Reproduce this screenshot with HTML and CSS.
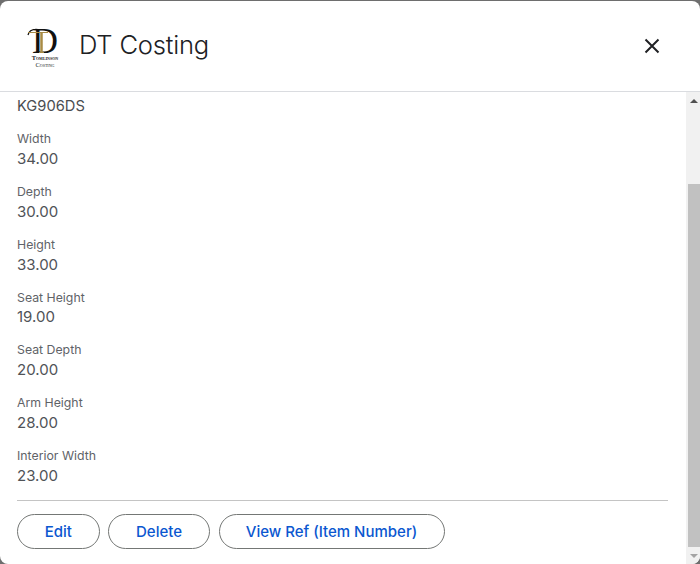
FILE: index.html
```html
<!DOCTYPE html>
<html lang="en">
<head>
<meta charset="utf-8">
<title>DT Costing</title>
<link rel="stylesheet" href="styles.css">
</head>
<body>
<div class="dialog">
  <header class="header">
    <svg class="logo" width="38" height="48" viewBox="0 0 38 48" aria-label="Tomlinson Costing logo">
      <text class="logo-d" x="6" y="31">D</text>
      <path class="logo-swash" d="M2 13 C3 8.500 7 7 12 7.500"/>
      <path class="logo-bar" d="M2 10.500 H22"/>
      <path class="logo-stem" d="M15.500 10.500 V30"/>
      <path class="logo-foot" d="M13 30.500 H18"/>
      <text class="logo-t1" x="19" y="37.500" text-anchor="middle">Tomlinson</text>
      <text class="logo-t2" x="19" y="44.500" text-anchor="middle">Costing</text>
    </svg>
    <h1 class="title">DT Costing</h1>
    <svg class="close" width="16" height="16" viewBox="0 0 16 16" aria-label="Close">
      <path d="M1.500 1.500 L14.500 14.500 M14.500 1.500 L1.500 14.500"/>
    </svg>
  </header>
  <div class="main">
    <div class="content">
      <div class="first">KG906DS</div>
      <div class="field"><div class="label">Width</div><div class="value">34.00</div></div>
      <div class="field"><div class="label">Depth</div><div class="value">30.00</div></div>
      <div class="field"><div class="label">Height</div><div class="value">33.00</div></div>
      <div class="field"><div class="label">Seat Height</div><div class="value">19.00</div></div>
      <div class="field"><div class="label">Seat Depth</div><div class="value">20.00</div></div>
      <div class="field"><div class="label">Arm Height</div><div class="value">28.00</div></div>
      <div class="field"><div class="label">Interior Width</div><div class="value">23.00</div></div>
      <div class="actions">
        <button class="btn btn-edit">Edit</button>
        <button class="btn btn-delete">Delete</button>
        <button class="btn btn-ref">View Ref (Item Number)</button>
      </div>
    </div>
    <div class="scrollbar">
      <div class="arrow-box"><span class="arrow-up"></span></div>
      <div class="track"><div class="thumb"></div></div>
      <div class="arrow-box"><span class="arrow-down"></span></div>
    </div>
  </div>
</div>
</body>
</html>
```
FILE: styles.css
```css
html, body {
  margin: 0;
  padding: 0;
  height: 100%;
  background: #6e6e6e;
  overflow: hidden;
}
body {
  font-family: Inter, "Liberation Sans", sans-serif;
  color: #3c4043;
}
.dialog {
  box-sizing: border-box;
  margin-top: 1px;
  height: 563px;
  background: #fff;
  border-radius: 8px;
  overflow: hidden;
  display: flex;
  flex-direction: column;
}
.header {
  box-sizing: border-box;
  height: 91px;
  flex: none;
  display: flex;
  align-items: center;
  padding: 0 40px 2px 26px;
  border-bottom: 1px solid #dadce0;
}
.logo { flex: none; margin: 2px 15px 0 0; }
.close { flex: none; margin-top: 2px; }
.logo-d { font: 36px "Liberation Serif", serif; fill: #111; }
.logo-swash { fill: none; stroke: #111; stroke-width: 1.200; }
.logo-bar { fill: none; stroke: #a98b45; stroke-width: 1; }
.logo-stem { fill: none; stroke: #a98b45; stroke-width: 2.500; }
.logo-foot { fill: none; stroke: #a98b45; stroke-width: 1; }
.logo-t1 { font: bold 6.400px "Liberation Serif", serif; font-variant: small-caps; fill: #222; }
.logo-t2 { font: 6.400px "Liberation Serif", serif; font-variant: small-caps; fill: #222; }
.title {
  margin: 0;
  flex: 1;
  font-family: Inter, sans-serif;
  font-weight: 300;
  font-size: 25.600px;
  line-height: 32px;
  color: #202124;
  letter-spacing: -0.2px;
}
.close path { fill: none; stroke: #202124; stroke-width: 2; }
.main {
  flex: 1;
  min-height: 0;
  display: flex;
}
.content {
  flex: 1;
  min-width: 0;
  padding: 5px 18px 0 17px;
}
.first {
  font-size: 14.700px;
  line-height: 18px;
  color: #4a4d51;
}
.field { margin-top: 16.300px; }
.field + .field { margin-top: 14px; }
.label {
  font-size: 12.300px;
  line-height: 15.800px;
  color: #5f6368;
}
.value {
  font-size: 15px;
  line-height: 23px;
  color: #505357;
}
.actions {
  margin-top: 13px;
  padding-top: 13px;
  border-top: 1px solid #c4c4c4;
  display: flex;
  gap: 8.500px;
}
.btn {
  box-sizing: border-box;
  height: 35px;
  padding: 0;
  background: #fff;
  border: 1px solid #747775;
  border-radius: 18px;
  font-family: Inter, "Liberation Sans", sans-serif;
  font-size: 15px;
  font-weight: 500;
  color: #0b57d0;
}
.btn-edit { width: 82.500px; }
.btn-delete { width: 102px; }
.btn-ref { width: 226px; }
.scrollbar {
  flex: none;
  width: 14px;
  background: #f1f1f1;
  display: flex;
  flex-direction: column;
}
.arrow-box {
  height: 17px;
  flex: none;
  display: flex;
  align-items: center;
  justify-content: center;
  padding-left: 2px;
}
.arrow-up {
  border-left: 4px solid transparent;
  border-right: 4px solid transparent;
  border-bottom: 4px solid #505050;
}
.arrow-down {
  border-left: 4px solid transparent;
  border-right: 4px solid transparent;
  border-top: 4px solid #a3a3a3;
}
.track {
  flex: 1;
  padding: 75px 0 0 2px;
  display: flex;
}
.thumb {
  flex: 1;
  background: #c1c1c1;
}
```
